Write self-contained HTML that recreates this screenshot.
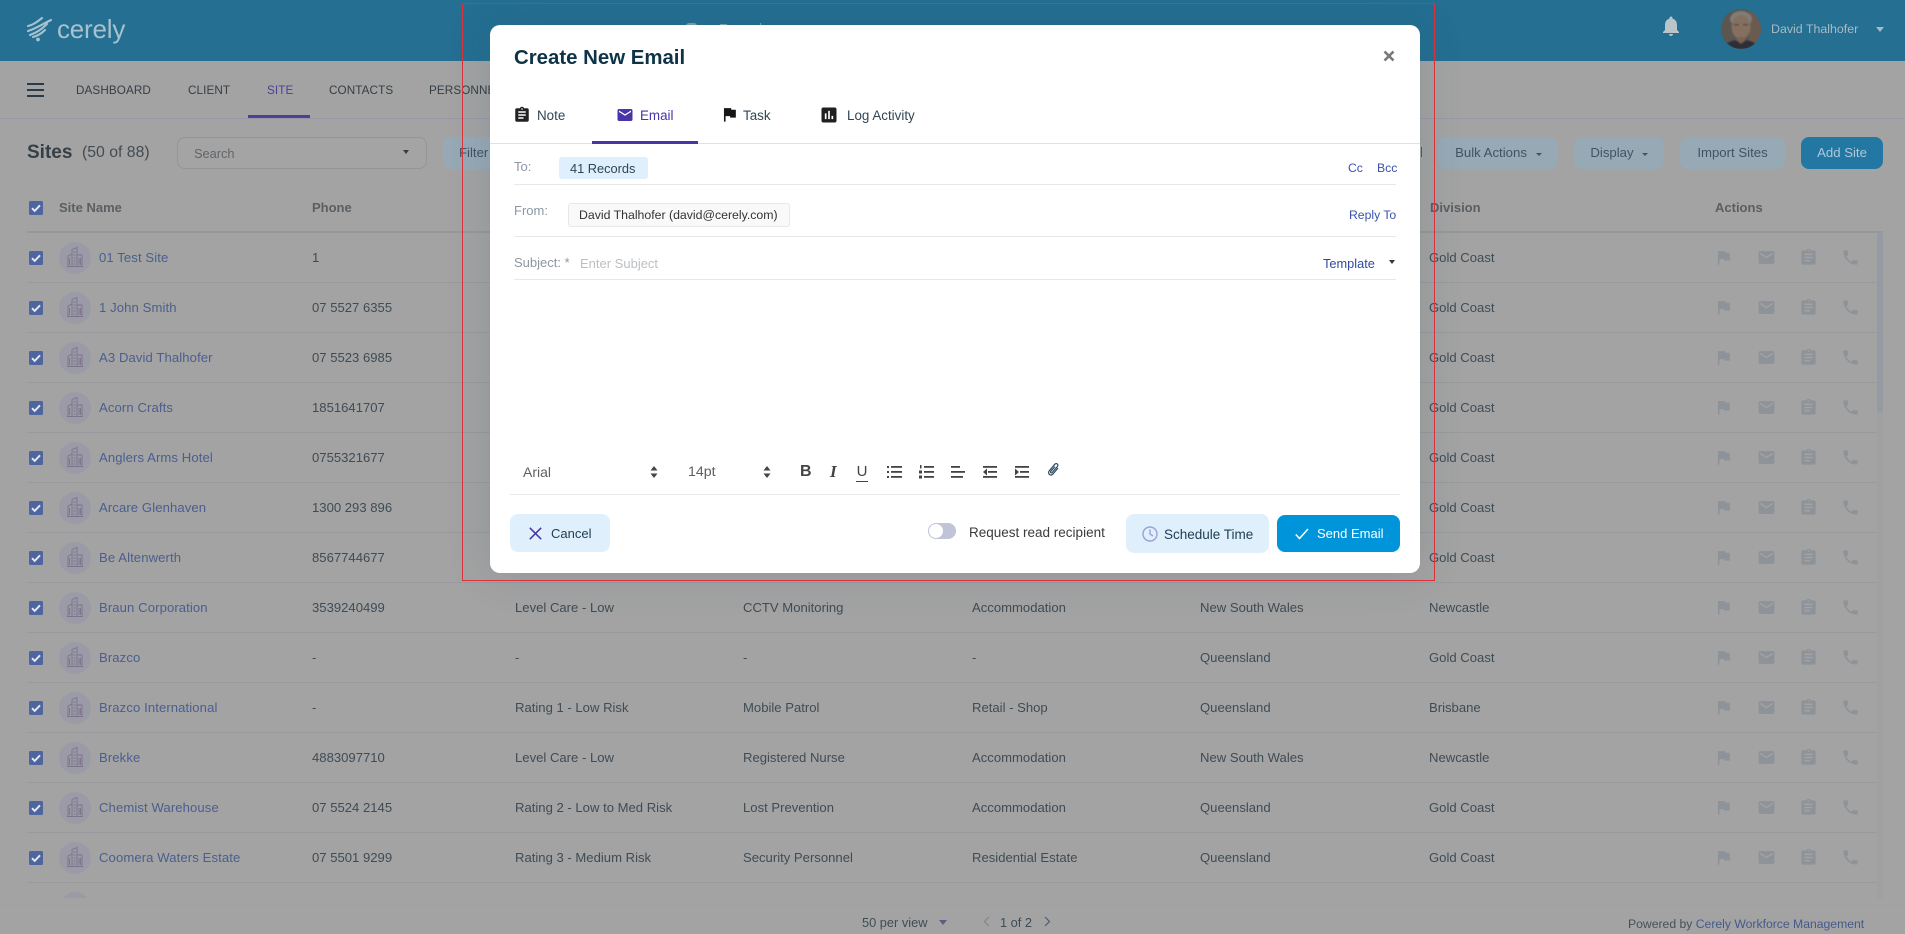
<!DOCTYPE html>
<html lang="en">
<head>
<meta charset="utf-8">
<title>Create New Email</title>
<style>
*{box-sizing:border-box}
html,body{margin:0;padding:0;width:1905px;height:934px;overflow:hidden;background:#a3a3a3;font-family:"Liberation Sans",sans-serif;color:#3f4c55}
.a{position:absolute;white-space:nowrap}
svg{display:block;overflow:visible}
#hdr{left:0;top:0;width:1905px;height:61px;background:#246f92}
.nav{font-size:11.7px;color:#343e45;top:84px;line-height:14px;letter-spacing:.1px}
.hb{left:27px;width:17px;height:2px;background:#2b3a43}
.btn{top:137px;height:32px;border-radius:8px;background:#98a9b6;font-size:13.2px;line-height:31px;color:#3f5362;text-align:center}
.th{top:200.5px;font-size:13px;font-weight:bold;color:#5a5f63;line-height:14px}
.cb{position:absolute;width:14px;height:14px;background:#4f659f;border-radius:1.5px}
.cb svg{position:absolute;left:2px;top:2px}
#list{left:0;top:233px;width:1905px;height:665px;overflow:hidden}
.r{position:absolute;left:27px;width:1850px;height:50px;border-bottom:1px solid #989a9c;font-size:13.1px;line-height:50px;color:#3f4c55}
.r>span{position:absolute;white-space:nowrap}
.r .n{left:72px;color:#4b5e8e;letter-spacing:.1px}
.r .p{left:285px}.r .c3{left:488px}.r .c4{left:716px}.r .c5{left:945px}.r .c6{left:1173px}.r .d{left:1402px}
.av{position:absolute;left:32px;top:9px;width:32px;height:32px;border-radius:50%;background:#9a9ba7}
.av svg{position:absolute;left:8px;top:5px}
.ai{position:absolute;top:15px;fill:#8d9399}
#modal{left:490px;top:25px;width:930px;height:548px;background:#fff;border-radius:10px;box-shadow:0 0 44px rgba(30,70,95,.16)}
.m{position:absolute;white-space:nowrap;line-height:16px}
.tab{font-size:13.4px;color:#2f4656;top:83px}
.ln{position:absolute;left:24px;width:882px;height:1px;background:#e8e8e8}
.lbl{font-size:13px;color:#8b97a2}
.lnk{font-size:12.2px;color:#3953ad}
</style>
</head>
<body>
<svg width="0" height="0" style="position:absolute">
<defs>
<symbol id="flag" viewBox="0 0 24 24"><path d="M14.4 6L14 4H5v17h2v-7h5.6l.4 2h7V6z"/></symbol>
<symbol id="mail" viewBox="0 0 24 24"><path d="M20 4H4c-1.1 0-1.99.9-1.99 2L2 18c0 1.1.9 2 2 2h16c1.1 0 2-.9 2-2V6c0-1.1-.9-2-2-2zm0 4l-8 5-8-5V6l8 5 8-5v2z"/></symbol>
<symbol id="clip" viewBox="0 0 24 24"><path d="M19 3h-4.18C14.4 1.84 13.3 1 12 1c-1.3 0-2.4.84-2.82 2H5c-1.1 0-2 .9-2 2v14c0 1.1.9 2 2 2h14c1.1 0 2-.9 2-2V5c0-1.1-.9-2-2-2zm-7 0c.55 0 1 .45 1 1s-.45 1-1 1-1-.45-1-1 .45-1 1-1zm2 14H7v-2h7v2zm3-4H7v-2h10v2zm0-4H7V7h10v2z"/></symbol>
<symbol id="phone" viewBox="0 0 24 24"><path d="M6.62 10.79c1.44 2.83 3.76 5.14 6.59 6.59l2.2-2.2c.27-.27.67-.36 1.02-.24 1.12.37 2.33.57 3.57.57.55 0 1 .45 1 1V20c0 .55-.45 1-1 1-9.39 0-17-7.61-17-17 0-.55.45-1 1-1h3.5c.55 0 1 .45 1 1 0 1.25.2 2.45.57 3.57.11.35.03.74-.25 1.02l-2.2 2.2z"/></symbol>
<symbol id="chart" viewBox="0 0 24 24"><path d="M19 3H5c-1.1 0-2 .9-2 2v14c0 1.1.9 2 2 2h14c1.1 0 2-.9 2-2V5c0-1.1-.9-2-2-2zM9 17H7v-7h2v7zm4 0h-2V7h2v10zm4 0h-2v-4h2v4z"/></symbol>
<symbol id="bld" viewBox="0 0 16 20"><g fill="none" stroke="#7b7389" stroke-width=".9"><path d="M0 19.5h16M1 19.5V9l4-2v12.500M5 19V2.500L10 .5V19M10 19V8h5v11.500"/><path d="M6.500 5h2M6.500 8h2M6.500 11h2M6.500 14h2M6.500 17h2M12 11v7M13.500 11v7M2.500 11v7"/></g></symbol>
<symbol id="chk" viewBox="0 0 10 10"><path d="M1 5.200l2.700 2.700L9 2.300" fill="none" stroke="#e8eaf0" stroke-width="1.900"/></symbol>
</defs>
</svg>

<div class="a" id="hdr"></div>
<div class="a" style="left:686px;top:23px;width:11px;height:3px;background:#84a0ae;border-radius:5px 5px 0 0"></div>
<div class="a" style="left:720px;top:24px;width:7px;height:2px;background:#84a0ae"></div>
<div class="a" style="left:760px;top:23px;width:1px;height:3px;background:#84a0ae"></div>
<svg class="a" style="left:27px;top:17px" width="26" height="25" viewBox="0 0 26 25" fill="none" stroke="#a6c2ce" stroke-width="2.100" stroke-linecap="round">
<path d="M1 9C6 8 10 5 15 1"/><path d="M1 14C8 12 14 8 24 3"/><path d="M3 18C9 16 15 12 20 7"/><path d="M6 20c4-1 8-3 12-7"/>
<circle cx="11" cy="22.500" r="1.900" fill="#a6c2ce" stroke="none"/>
</svg>
<div class="a" style="left:57px;top:12px;font-size:26px;line-height:34px;color:#a8c2cd;letter-spacing:-.2px">cerely</div>
<svg class="a" style="left:1659px;top:14px;fill:#bac5ca" width="24" height="24"><path d="M12 22c1.100 0 2-.9 2-2h-4c0 1.100.89 2 2 2zm6-6v-5c0-3.070-1.640-5.640-4.500-6.320V4c0-.83-.67-1.500-1.500-1.500s-1.500.67-1.500 1.500v.68C7.630 5.360 6 7.920 6 11v5l-2 2v1h16v-1l-2-2z"/></svg>
<svg class="a" style="left:1721px;top:9px" width="40" height="40" viewBox="0 0 40 40">
<clipPath id="avc"><circle cx="20" cy="20" r="20"/></clipPath>
<g clip-path="url(#avc)"><rect width="40" height="40" fill="#5c5650"/><rect x="28" width="12" height="40" fill="#6a5a50"/>
<g style="filter:blur(.8px)"><ellipse cx="20" cy="10" rx="11" ry="8" fill="#807d77"/><ellipse cx="20" cy="18" rx="9.500" ry="12" fill="#85705f"/>
<path d="M2 40c2-7 10-9 18-9s16 2 18 9z" fill="#2c3036"/><path d="M15 31l5 4 5-4-2-3h-6z" fill="#7a6355"/>
<rect x="13" y="15" width="5" height="1.500" fill="#5d4c44"/><rect x="22" y="15" width="5" height="1.500" fill="#5d4c44"/></g></g>
</svg>
<div class="a" style="left:1771px;top:21px;font-size:12.4px;line-height:16px;color:#a9bac3">David Thalhofer</div>
<div class="a" style="left:1876px;top:27px;width:0;height:0;border-left:4px solid transparent;border-right:4px solid transparent;border-top:5px solid #a9bac3"></div>

<div class="a hb" style="top:83px"></div><div class="a hb" style="top:89px"></div><div class="a hb" style="top:95px"></div>
<div class="a nav" style="left:76px">DASHBOARD</div>
<div class="a nav" style="left:188px">CLIENT</div>
<div class="a nav" style="left:267px;color:#4d3f98">SITE</div>
<div class="a nav" style="left:329px">CONTACTS</div>
<div class="a nav" style="left:429px">PERSONNEL</div>
<div class="a" style="left:0;top:118px;width:1905px;height:1px;background:#9897a8"></div>
<div class="a" style="left:248px;top:115px;width:62px;height:3px;background:#4d3f98"></div>

<div class="a" style="left:27px;top:139px;font-size:19px;font-weight:bold;line-height:28px;color:#353f46">Sites</div>
<div class="a" style="left:82px;top:143px;font-size:15.800px;line-height:20px;color:#434c53">(50 of 88)</div>
<div class="a" style="left:177px;top:137px;width:250px;height:32px;border:1px solid #959598;border-radius:8px;background:#a4a4a4"></div>
<div class="a" style="left:194px;top:146px;font-size:12.800px;line-height:15px;color:#5f6569">Search</div>
<div class="a" style="left:403px;top:150px;width:0;height:0;border-left:3px solid transparent;border-right:3px solid transparent;border-top:4px solid #333d44"></div>
<div class="a btn" style="left:443px;width:60px;text-align:left;padding-left:16px">Filter</div>
<div class="a" style="left:1421px;top:147px;width:1px;height:10px;background:#4d5a64"></div>
<div class="a btn" style="left:1438px;width:120px;padding-right:14px">Bulk Actions</div>
<div class="a" style="left:1536px;top:153px;width:0;height:0;border-left:3px solid transparent;border-right:3px solid transparent;border-top:3.500px solid #3f5362"></div>
<div class="a btn" style="left:1574px;width:90px;padding-right:14px">Display</div>
<div class="a" style="left:1642px;top:153px;width:0;height:0;border-left:3px solid transparent;border-right:3px solid transparent;border-top:3.500px solid #3f5362"></div>
<div class="a btn" style="left:1680px;width:105px">Import Sites</div>
<div class="a btn" style="left:1801px;width:82px;background:#2377a3;color:#adc8d6">Add Site</div>

<div class="cb" style="left:29px;top:201px"><svg width="10" height="10"><use href="#chk"/></svg></div>
<div class="a th" style="left:59px">Site Name</div>
<div class="a th" style="left:312px">Phone</div>
<div class="a th" style="left:1430px">Division</div>
<div class="a th" style="left:1715px">Actions</div>
<div class="a" style="left:27px;top:231px;width:1856px;height:2px;background:#979797"></div>

<div class="a" id="list">
<div class="r" style="top:0"><div class="cb" style="left:2px;top:18px"><svg width="10" height="10"><use href="#chk"/></svg></div><div class="av"><svg width="16" height="20"><use href="#bld"/></svg></div><span class="n">01 Test Site</span><span class="p">1</span><span class="d">Gold Coast</span><svg class="ai" style="left:1687px" width="19" height="19"><use href="#flag"/></svg><svg class="ai" style="left:1730px" width="19" height="19"><use href="#mail"/></svg><svg class="ai" style="left:1772px" width="19" height="19"><use href="#clip"/></svg><svg class="ai" style="left:1814px" width="19" height="19"><use href="#phone"/></svg></div>
<div class="r" style="top:50px"><div class="cb" style="left:2px;top:18px"><svg width="10" height="10"><use href="#chk"/></svg></div><div class="av"><svg width="16" height="20"><use href="#bld"/></svg></div><span class="n">1 John Smith</span><span class="p">07 5527 6355</span><span class="d">Gold Coast</span><svg class="ai" style="left:1687px" width="19" height="19"><use href="#flag"/></svg><svg class="ai" style="left:1730px" width="19" height="19"><use href="#mail"/></svg><svg class="ai" style="left:1772px" width="19" height="19"><use href="#clip"/></svg><svg class="ai" style="left:1814px" width="19" height="19"><use href="#phone"/></svg></div>
<div class="r" style="top:100px"><div class="cb" style="left:2px;top:18px"><svg width="10" height="10"><use href="#chk"/></svg></div><div class="av"><svg width="16" height="20"><use href="#bld"/></svg></div><span class="n">A3 David Thalhofer</span><span class="p">07 5523 6985</span><span class="d">Gold Coast</span><svg class="ai" style="left:1687px" width="19" height="19"><use href="#flag"/></svg><svg class="ai" style="left:1730px" width="19" height="19"><use href="#mail"/></svg><svg class="ai" style="left:1772px" width="19" height="19"><use href="#clip"/></svg><svg class="ai" style="left:1814px" width="19" height="19"><use href="#phone"/></svg></div>
<div class="r" style="top:150px"><div class="cb" style="left:2px;top:18px"><svg width="10" height="10"><use href="#chk"/></svg></div><div class="av"><svg width="16" height="20"><use href="#bld"/></svg></div><span class="n">Acorn Crafts</span><span class="p">1851641707</span><span class="d">Gold Coast</span><svg class="ai" style="left:1687px" width="19" height="19"><use href="#flag"/></svg><svg class="ai" style="left:1730px" width="19" height="19"><use href="#mail"/></svg><svg class="ai" style="left:1772px" width="19" height="19"><use href="#clip"/></svg><svg class="ai" style="left:1814px" width="19" height="19"><use href="#phone"/></svg></div>
<div class="r" style="top:200px"><div class="cb" style="left:2px;top:18px"><svg width="10" height="10"><use href="#chk"/></svg></div><div class="av"><svg width="16" height="20"><use href="#bld"/></svg></div><span class="n">Anglers Arms Hotel</span><span class="p">0755321677</span><span class="d">Gold Coast</span><svg class="ai" style="left:1687px" width="19" height="19"><use href="#flag"/></svg><svg class="ai" style="left:1730px" width="19" height="19"><use href="#mail"/></svg><svg class="ai" style="left:1772px" width="19" height="19"><use href="#clip"/></svg><svg class="ai" style="left:1814px" width="19" height="19"><use href="#phone"/></svg></div>
<div class="r" style="top:250px"><div class="cb" style="left:2px;top:18px"><svg width="10" height="10"><use href="#chk"/></svg></div><div class="av"><svg width="16" height="20"><use href="#bld"/></svg></div><span class="n">Arcare Glenhaven</span><span class="p">1300 293 896</span><span class="d">Gold Coast</span><svg class="ai" style="left:1687px" width="19" height="19"><use href="#flag"/></svg><svg class="ai" style="left:1730px" width="19" height="19"><use href="#mail"/></svg><svg class="ai" style="left:1772px" width="19" height="19"><use href="#clip"/></svg><svg class="ai" style="left:1814px" width="19" height="19"><use href="#phone"/></svg></div>
<div class="r" style="top:300px"><div class="cb" style="left:2px;top:18px"><svg width="10" height="10"><use href="#chk"/></svg></div><div class="av"><svg width="16" height="20"><use href="#bld"/></svg></div><span class="n">Be Altenwerth</span><span class="p">8567744677</span><span class="d">Gold Coast</span><svg class="ai" style="left:1687px" width="19" height="19"><use href="#flag"/></svg><svg class="ai" style="left:1730px" width="19" height="19"><use href="#mail"/></svg><svg class="ai" style="left:1772px" width="19" height="19"><use href="#clip"/></svg><svg class="ai" style="left:1814px" width="19" height="19"><use href="#phone"/></svg></div>
<div class="r" style="top:350px"><div class="cb" style="left:2px;top:18px"><svg width="10" height="10"><use href="#chk"/></svg></div><div class="av"><svg width="16" height="20"><use href="#bld"/></svg></div><span class="n">Braun Corporation</span><span class="p">3539240499</span><span class="c3">Level Care - Low</span><span class="c4">CCTV Monitoring</span><span class="c5">Accommodation</span><span class="c6">New South Wales</span><span class="d">Newcastle</span><svg class="ai" style="left:1687px" width="19" height="19"><use href="#flag"/></svg><svg class="ai" style="left:1730px" width="19" height="19"><use href="#mail"/></svg><svg class="ai" style="left:1772px" width="19" height="19"><use href="#clip"/></svg><svg class="ai" style="left:1814px" width="19" height="19"><use href="#phone"/></svg></div>
<div class="r" style="top:400px"><div class="cb" style="left:2px;top:18px"><svg width="10" height="10"><use href="#chk"/></svg></div><div class="av"><svg width="16" height="20"><use href="#bld"/></svg></div><span class="n">Brazco</span><span class="p">-</span><span class="c3">-</span><span class="c4">-</span><span class="c5">-</span><span class="c6">Queensland</span><span class="d">Gold Coast</span><svg class="ai" style="left:1687px" width="19" height="19"><use href="#flag"/></svg><svg class="ai" style="left:1730px" width="19" height="19"><use href="#mail"/></svg><svg class="ai" style="left:1772px" width="19" height="19"><use href="#clip"/></svg><svg class="ai" style="left:1814px" width="19" height="19"><use href="#phone"/></svg></div>
<div class="r" style="top:450px"><div class="cb" style="left:2px;top:18px"><svg width="10" height="10"><use href="#chk"/></svg></div><div class="av"><svg width="16" height="20"><use href="#bld"/></svg></div><span class="n">Brazco International</span><span class="p">-</span><span class="c3">Rating 1 - Low Risk</span><span class="c4">Mobile Patrol</span><span class="c5">Retail - Shop</span><span class="c6">Queensland</span><span class="d">Brisbane</span><svg class="ai" style="left:1687px" width="19" height="19"><use href="#flag"/></svg><svg class="ai" style="left:1730px" width="19" height="19"><use href="#mail"/></svg><svg class="ai" style="left:1772px" width="19" height="19"><use href="#clip"/></svg><svg class="ai" style="left:1814px" width="19" height="19"><use href="#phone"/></svg></div>
<div class="r" style="top:500px"><div class="cb" style="left:2px;top:18px"><svg width="10" height="10"><use href="#chk"/></svg></div><div class="av"><svg width="16" height="20"><use href="#bld"/></svg></div><span class="n">Brekke</span><span class="p">4883097710</span><span class="c3">Level Care - Low</span><span class="c4">Registered Nurse</span><span class="c5">Accommodation</span><span class="c6">New South Wales</span><span class="d">Newcastle</span><svg class="ai" style="left:1687px" width="19" height="19"><use href="#flag"/></svg><svg class="ai" style="left:1730px" width="19" height="19"><use href="#mail"/></svg><svg class="ai" style="left:1772px" width="19" height="19"><use href="#clip"/></svg><svg class="ai" style="left:1814px" width="19" height="19"><use href="#phone"/></svg></div>
<div class="r" style="top:550px"><div class="cb" style="left:2px;top:18px"><svg width="10" height="10"><use href="#chk"/></svg></div><div class="av"><svg width="16" height="20"><use href="#bld"/></svg></div><span class="n">Chemist Warehouse</span><span class="p">07 5524 2145</span><span class="c3">Rating 2 - Low to Med Risk</span><span class="c4">Lost Prevention</span><span class="c5">Accommodation</span><span class="c6">Queensland</span><span class="d">Gold Coast</span><svg class="ai" style="left:1687px" width="19" height="19"><use href="#flag"/></svg><svg class="ai" style="left:1730px" width="19" height="19"><use href="#mail"/></svg><svg class="ai" style="left:1772px" width="19" height="19"><use href="#clip"/></svg><svg class="ai" style="left:1814px" width="19" height="19"><use href="#phone"/></svg></div>
<div class="r" style="top:600px"><div class="cb" style="left:2px;top:18px"><svg width="10" height="10"><use href="#chk"/></svg></div><div class="av"><svg width="16" height="20"><use href="#bld"/></svg></div><span class="n">Coomera Waters Estate</span><span class="p">07 5501 9299</span><span class="c3">Rating 3 - Medium Risk</span><span class="c4">Security Personnel</span><span class="c5">Residential Estate</span><span class="c6">Queensland</span><span class="d">Gold Coast</span><svg class="ai" style="left:1687px" width="19" height="19"><use href="#flag"/></svg><svg class="ai" style="left:1730px" width="19" height="19"><use href="#mail"/></svg><svg class="ai" style="left:1772px" width="19" height="19"><use href="#clip"/></svg><svg class="ai" style="left:1814px" width="19" height="19"><use href="#phone"/></svg></div>
<div class="r" style="top:650px;border:0"><div class="av"></div></div>
</div>
<div class="a" style="left:1877px;top:233px;width:6px;height:665px;background:#a0a0a0"></div>
<div class="a" style="left:1877px;top:233px;width:6px;height:180px;background:#959ba2;border-radius:3px"></div>
<div class="a" style="left:0;top:905px;width:1905px;height:1px;background:#a0a0a0"></div>

<div class="a" style="left:862px;top:915px;font-size:12.800px;line-height:15px;color:#3f4c55">50 per view</div>
<div class="a" style="left:939px;top:920px;width:0;height:0;border-left:4px solid transparent;border-right:4px solid transparent;border-top:5px solid #5a5f80"></div>
<svg class="a" style="left:983px;top:916px" width="7" height="11" fill="none" stroke="#80848c" stroke-width="1.200"><path d="M6 1L1.500 5.500 6 10"/></svg>
<div class="a" style="left:1000px;top:915px;font-size:12.800px;line-height:15px;color:#3f4c55">1 of 2</div>
<svg class="a" style="left:1044px;top:916px" width="7" height="11" fill="none" stroke="#4f5a70" stroke-width="1.200"><path d="M1 1l4.500 4.500L1 10"/></svg>
<div class="a" style="left:1628px;top:917px;font-size:12.200px;line-height:15px;color:#46505a">Powered by <span style="color:#445a8a">Cerely Workforce Management</span></div>

<div class="a" id="modal">
<div class="m" style="left:24px;top:20px;font-size:20.400px;font-weight:bold;line-height:26px;color:#0e3347">Create New Email</div>
<svg class="m" style="left:893px;top:25px" width="12" height="12" fill="none" stroke="#777" stroke-width="2.600"><path d="M1.500 1.500l9 9M10.500 1.500l-9 9"/></svg>

<svg class="m" style="left:23px;top:81px;fill:#222" width="18" height="18"><use href="#clip"/></svg>
<div class="m tab" style="left:47px">Note</div>
<svg class="m" style="left:125.500px;top:81px;fill:#4a34a8" width="18" height="18"><use href="#mail"/></svg>
<div class="m tab" style="left:150px;color:#4a34a8">Email</div>
<svg class="m" style="left:230px;top:80px;fill:#161616" width="19" height="19"><use href="#flag"/></svg>
<div class="m tab" style="left:253px">Task</div>
<svg class="m" style="left:329px;top:80px;fill:#1f1f1f" width="20" height="20"><use href="#chart"/></svg>
<div class="m tab" style="left:357px">Log Activity</div>
<div class="m" style="left:0;top:118px;width:930px;height:1px;background:#dfe0ee"></div>
<div class="m" style="left:102px;top:116px;width:106px;height:3px;background:#4a34a8"></div>

<div class="m lbl" style="left:24px;top:134px">To:</div>
<div class="m" style="left:69px;top:132px;width:89px;height:22px;background:#dff0fc;border-radius:3px;font-size:12.800px;line-height:23px;color:#2c4656;padding-left:11px">41 Records</div>
<div class="m lnk" style="left:858px;top:135px">Cc</div>
<div class="m lnk" style="left:887px;top:135px">Bcc</div>
<div class="ln" style="top:159px"></div>

<div class="m lbl" style="left:24px;top:178px">From:</div>
<div class="m" style="left:78px;top:178px;width:222px;height:24px;border:1px solid #e8e8e8;border-radius:3px;background:#f9f9f9;font-size:12.300px;line-height:22px;color:#333;padding-left:10px">David Thalhofer (david@cerely.com)</div>
<div class="m lnk" style="left:859px;top:182px">Reply To</div>
<div class="ln" style="top:211px"></div>

<div class="m lbl" style="left:24px;top:230px">Subject: *</div>
<div class="m" style="left:90px;top:231px;font-size:13px;color:#bcc0c4">Enter Subject</div>
<div class="m lnk" style="left:833px;top:231px;font-size:12.800px;color:#2f4aa3">Template</div>
<div class="m" style="left:899px;top:235px;width:0;height:0;border-left:3px solid transparent;border-right:3px solid transparent;border-top:4px solid #2c3a43"></div>
<div class="ln" style="top:254px"></div>

<div class="m" style="left:33px;top:439px;font-size:14px;color:#5f5f5f">Arial</div>
<svg class="m" style="left:160px;top:441px" width="8" height="12" fill="#444"><path d="M4 0l3.500 4.500h-7zM4 12L.5 7.500h7z"/></svg>
<div class="m" style="left:198px;top:439px;font-size:14.200px;color:#5f5f5f">14pt</div>
<svg class="m" style="left:273px;top:441px" width="8" height="12" fill="#444"><path d="M4 0l3.500 4.500h-7zM4 12L.5 7.500h7z"/></svg>

<div class="m" style="left:310px;top:439px;font-size:16px;font-weight:bold;color:#444">B</div>
<div class="m" style="left:340px;top:439px;font-family:'Liberation Serif',serif;font-size:17px;font-style:italic;font-weight:bold;color:#444">I</div>
<div class="m" style="left:366px;top:439px;width:12px;height:18px;border-bottom:1.500px solid #444;font-size:15px;text-align:center;color:#444;line-height:15px">U</div>

<svg class="m" style="left:397px;top:441px" width="15" height="12" fill="#444"><rect y="0" width="2" height="2"/><rect y="5" width="2" height="2"/><rect y="10" width="2" height="2"/><rect x="4" y="0" width="11" height="1.800"/><rect x="4" y="5" width="11" height="1.800"/><rect x="4" y="10" width="11" height="1.800"/></svg>
<svg class="m" style="left:429px;top:440px" width="15" height="14" fill="#444"><rect x="5" y="1" width="10" height="1.800"/><rect x="5" y="6" width="10" height="1.800"/><rect x="5" y="11" width="10" height="1.800"/><rect x="1" y="0" width="1.500" height="3.500"/><rect x="0" y="5.500" width="3" height="3"/><rect x="0" y="10.500" width="3" height="3"/></svg>
<svg class="m" style="left:461px;top:441px" width="14" height="12" fill="#444"><rect width="9" height="1.800"/><rect y="5" width="14" height="1.800"/><rect y="10" width="12" height="1.800"/></svg>
<svg class="m" style="left:493px;top:441px" width="14" height="12" fill="#444"><rect width="14" height="1.800"/><rect y="10" width="14" height="1.800"/><rect x="5" y="5" width="9" height="1.800"/><path d="M0 6l4-3.500v7z"/></svg>
<svg class="m" style="left:525px;top:441px" width="14" height="12" fill="#444"><rect width="14" height="1.800"/><rect y="10" width="14" height="1.800"/><rect x="5" y="5" width="9" height="1.800"/><path d="M4 6L0 2.500v7z"/></svg>
<svg class="m" style="left:557px;top:438px" width="13" height="14" fill="none" stroke="#2c4a5e" stroke-width="1.200"><path d="M11 5L6 11c-1 1.200-2.600 1.300-3.600.4S1.300 9 2.300 7.800l5.500-6.500c.7-.8 1.800-.9 2.500-.3s.8 1.700.1 2.500L5.200 9.500c-.4.500-1 .5-1.400.2s-.4-1-.1-1.400L8 3.600"/></svg>
<div class="m" style="left:20px;top:469px;width:890px;height:1px;background:#e8e8e8"></div>

<div class="m" style="left:20px;top:489px;width:100px;height:38px;background:#dff0fc;border-radius:8px"></div>
<svg class="m" style="left:39px;top:502px" width="13" height="13" fill="none" stroke="#4a34a8" stroke-width="1.500"><path d="M.8.8l11.400 11.400M12.200.8L.8 12.200"/></svg>
<div class="m" style="left:61px;top:501px;font-size:13px;color:#1c3d52">Cancel</div>

<div class="m" style="left:438px;top:498px;width:28px;height:16px;background:#c1c3d6;border-radius:8px"></div>
<div class="m" style="left:439px;top:499px;width:14px;height:14px;background:#fff;border-radius:50%"></div>
<div class="m" style="left:479px;top:500px;font-size:13.500px;color:#3b3b3b">Request read recipient</div>

<div class="m" style="left:636px;top:489px;width:143px;height:39px;background:#dff0fc;border-radius:8px"></div>
<svg class="m" style="left:652px;top:501px" width="16" height="16" fill="none" stroke="#9d9fd9" stroke-width="1.400"><circle cx="8" cy="8" r="7"/><path d="M8 3.500V8l3 2"/></svg>
<div class="m" style="left:674px;top:502px;font-size:13.500px;color:#1c3d52">Schedule Time</div>

<div class="m" style="left:787px;top:490px;width:123px;height:37px;background:#0095da;border-radius:8px"></div>
<svg class="m" style="left:805px;top:503px" width="14" height="12" fill="none" stroke="#fff" stroke-width="1.500"><path d="M.8 6.500L4.500 10.500 13 1"/></svg>
<div class="m" style="left:827px;top:501px;font-size:13px;color:#fff">Send Email</div>
</div>

<div class="a" style="left:462px;top:3px;width:973px;height:578px;border:1.500px solid #d8333a"></div>
</body>
</html>
